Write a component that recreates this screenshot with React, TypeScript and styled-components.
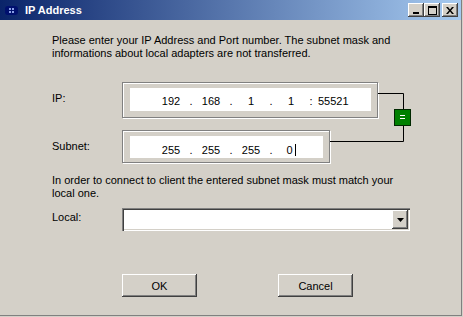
import React from 'react';
import styled, { createGlobalStyle } from 'styled-components';

const GlobalStyle = createGlobalStyle`
  html, body {
    margin: 0;
    padding: 0;
    background: #d4d0c8;
  }
  body {
    font-family: 'Liberation Sans', Arial, sans-serif;
    font-size: 11px;
    color: #000;
  }
`;

const Window = styled.div`
  width: 462px;
  height: 316px;
  box-sizing: border-box;
  display: flex;
  flex-direction: column;
  background: #d4d0c8;
  border-right: 1px solid #808080;
  border-bottom: 1px solid #808080;
`;

const TitleBar = styled.div`
  height: 20px;
  flex: none;
  display: flex;
  align-items: center;
  padding: 0 3px 0 5px;
  background: linear-gradient(to right, #0a246a, #a6caf0);
  color: #fff;
  font-weight: bold;
  font-size: 11px;
`;

const Title = styled.span`
  flex: 1;
  margin-left: 7px;
  line-height: 13px;
`;

const CaptionButtons = styled.div`
  display: flex;
  align-items: center;
`;

const CaptionButton = styled.div<{ $gap?: number }>`
  width: 16px;
  height: 14px;
  margin-left: ${(p) => p.$gap ?? 0}px;
  display: flex;
  align-items: center;
  justify-content: center;
  background: #d4d0c8;
  box-shadow: inset -1px -1px #404040, inset 1px 1px #fff, inset -2px -2px #808080;
`;

const Body = styled.div`
  flex: 1;
  display: flex;
  flex-direction: column;
  padding: 14px 0 0 52px;
`;

const Para = styled.p<{ $top?: number }>`
  margin: ${(p) => p.$top ?? 0}px 0 0;
  line-height: 13px;
`;

const Fields = styled.div`
  position: relative;
  margin-top: 22px;
  display: flex;
  flex-direction: column;
  gap: 12px;
`;

const Row = styled.div<{ $top?: number }>`
  display: flex;
  align-items: flex-start;
  margin-top: ${(p) => p.$top ?? 0}px;
`;

const Label = styled.div<{ $top: number }>`
  width: 70px;
  flex: none;
  padding-top: ${(p) => p.$top}px;
  line-height: 13px;
`;

const Frame = styled.div<{ $w: number; $pb: number }>`
  width: ${(p) => p.$w}px;
  box-sizing: border-box;
  padding: 5px 6px ${(p) => p.$pb}px 7px;
  border: 1px solid #808080;
  box-shadow: 1px 1px 0 #fff, inset 1px 1px 0 #fff;
`;

const Entry = styled.div<{ $h: number; $pt: number }>`
  height: ${(p) => p.$h}px;
  box-sizing: border-box;
  background: #fff;
  display: flex;
  padding: ${(p) => p.$pt}px 0 0 26px;
  line-height: 13px;
  font-size: 11px;
`;

const Octet = styled.span`
  width: 30px;
  text-align: center;
  white-space: nowrap;
`;

const Sep = styled.span`
  width: 10px;
  text-align: center;
`;

const Port = styled.span`
  margin-left: 2px;
`;

const Caret = styled.span`
  display: inline-block;
  width: 1px;
  height: 12px;
  margin-left: 2px;
  vertical-align: -2px;
  background: #000;
`;

const Connector = styled.svg`
  position: absolute;
  left: 0;
  top: 0;
  pointer-events: none;
`;

const Combo = styled.div`
  width: 288px;
  height: 23px;
  box-sizing: border-box;
  background: #fff;
  display: flex;
  justify-content: flex-end;
  padding: 2px;
  box-shadow: inset 1px 1px #808080, inset 2px 2px #404040, inset -1px -1px #fff,
    inset -2px -2px #d4d0c8;
`;

const DropButton = styled.div`
  width: 16px;
  height: 19px;
  display: flex;
  align-items: center;
  justify-content: center;
  background: #d4d0c8;
  box-shadow: inset -1px -1px #404040, inset 1px 1px #fff, inset -2px -2px #808080,
    inset 2px 2px #d4d0c8;
`;

const Buttons = styled.div`
  display: flex;
  gap: 81px;
  margin-top: 43px;
  padding-left: 70px;
`;

const Button = styled.div`
  width: 75px;
  height: 23px;
  display: flex;
  align-items: center;
  justify-content: center;
  background: #d4d0c8;
  box-shadow: inset -1px -1px #404040, inset 1px 1px #fff, inset -2px -2px #808080;
  font-size: 11px;
`;

function AppIcon() {
  return (
    <svg width="13" height="9" viewBox="0 0 13 9">
      <rect x="0" y="0" width="13" height="9" rx="3" fill="#00106e" />
      <rect x="4" y="2" width="2" height="2" fill="#8aa0e8" />
      <rect x="7" y="2" width="2" height="2" fill="#8aa0e8" />
      <rect x="4" y="5" width="2" height="2" fill="#8aa0e8" />
      <rect x="7" y="5" width="2" height="2" fill="#8aa0e8" />
    </svg>
  );
}

export default function App() {
  return (
    <>
      <GlobalStyle />
      <Window>
        <TitleBar>
          <AppIcon />
          <Title>IP Address</Title>
          <CaptionButtons>
            <CaptionButton>
              <svg width="8" height="7" viewBox="0 0 8 7">
                <rect x="1" y="5" width="6" height="2" fill="#000" />
              </svg>
            </CaptionButton>
            <CaptionButton>
              <svg width="9" height="9" viewBox="0 0 9 9">
                <rect x="0.5" y="0.5" width="8" height="8" fill="none" stroke="#000" />
                <rect x="0" y="1" width="9" height="1" fill="#000" />
              </svg>
            </CaptionButton>
            <CaptionButton $gap={2}>
              <svg width="8" height="7" viewBox="0 0 8 7">
                <path d="M0 0h2l2 2.5 2-2.5h2L5 3.5 8 7H6L4 4.5 2 7H0l3-3.5z" fill="#000" />
              </svg>
            </CaptionButton>
          </CaptionButtons>
        </TitleBar>
        <Body>
          <Para>
            Please enter your IP Address and Port number. The subnet mask and
            <br />
            informations about local adapters are not transferred.
          </Para>
          <Fields>
            <Row>
              <Label $top={10}>IP:</Label>
              <Frame $w={256} $pb={6}>
                <Entry $h={23} $pt={7}>
                  <Octet>192</Octet>
                  <Sep>.</Sep>
                  <Octet>168</Octet>
                  <Sep>.</Sep>
                  <Octet>1</Octet>
                  <Sep>.</Sep>
                  <Octet>1</Octet>
                  <Sep>:</Sep>
                  <Port>55521</Port>
                </Entry>
              </Frame>
            </Row>
            <Row>
              <Label $top={10}>Subnet:</Label>
              <Frame $w={208} $pb={4}>
                <Entry $h={22} $pt={8}>
                  <Octet>255</Octet>
                  <Sep>.</Sep>
                  <Octet>255</Octet>
                  <Sep>.</Sep>
                  <Octet>255</Octet>
                  <Sep>.</Sep>
                  <Octet>
                    0<Caret />
                  </Octet>
                </Entry>
              </Frame>
            </Row>
            <Connector width="360" height="82" viewBox="0 0 360 82">
              <path d="M326 11.5H351.5V59.5H278" fill="none" stroke="#000" strokeWidth="1" />
              <rect x="342.5" y="27.5" width="16" height="16" fill="#008000" stroke="#002800" />
              <rect x="348" y="33" width="5" height="1" fill="#fff" />
              <rect x="348" y="36" width="5" height="1" fill="#fff" />
            </Connector>
          </Fields>
          <Para $top={11}>
            In order to connect to client the entered subnet mask must match your
            <br />
            local one.
          </Para>
          <Row $top={8}>
            <Label $top={3}>Local:</Label>
            <Combo>
              <DropButton>
                <svg width="7" height="4" viewBox="0 0 7 4">
                  <path d="M0 0h7L3.5 4z" fill="#000" />
                </svg>
              </DropButton>
            </Combo>
          </Row>
          <Buttons>
            <Button>OK</Button>
            <Button>Cancel</Button>
          </Buttons>
        </Body>
      </Window>
    </>
  );
}
